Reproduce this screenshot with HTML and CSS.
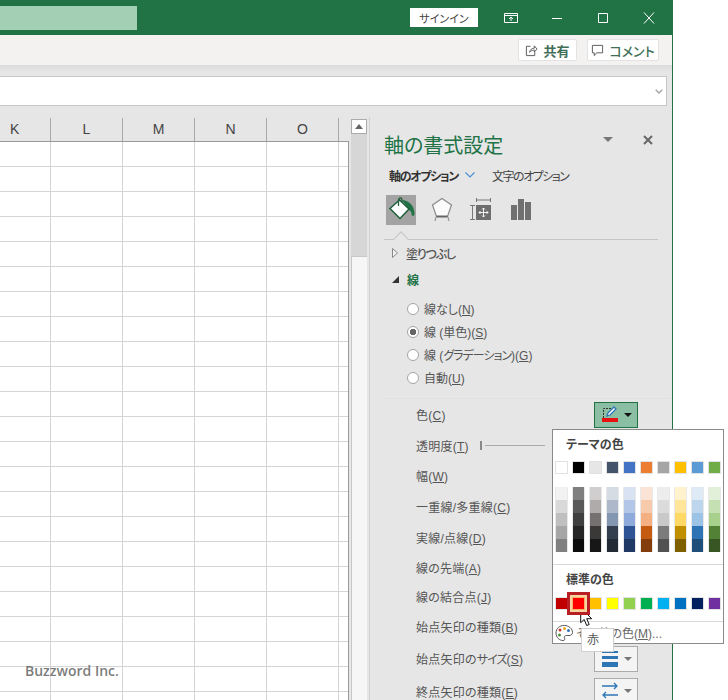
FILE: index.html
```html
<!DOCTYPE html>
<html lang="ja">

<head>
    <meta charset="utf-8">
    <link rel="stylesheet" href="styles.css">
</head>

<body>

    <div class="app">
        <header class="titlebar">
            <div class="file-name"></div>
            <button class="signin">サインイン</button>
            <div class="win-controls">
                <svg class="win-icon" viewBox="0 0 14 12"><path d="M.5 1.5h13v9H.5zM.5 3.5h13M7 9V5M5 7l2-2 2 2" fill="none" stroke="#fff"/></svg>
                <svg class="win-icon" viewBox="0 0 14 12"><path d="M2 6.5h10" fill="none" stroke="#fff"/></svg>
                <svg class="win-icon" viewBox="0 0 14 12"><path d="M2.5 1.5h9v9h-9z" fill="none" stroke="#fff"/></svg>
                <svg class="win-icon" viewBox="0 0 14 12"><path d="M2 .5l10 11M12 .5l-10 11" fill="none" stroke="#fff"/></svg>
            </div>
        </header>

        <div class="ribbon">
            <button class="ribbon-btn share-btn">
                <svg class="ribbon-icon" viewBox="0 0 14 14"><path d="M6 2.5H1.5v10h9V8M5 9c.3-3 2.500-4.500 5-4.500V2l3 3.500-3 3V6.500C8 6.500 6 7.500 5 9z" fill="none" stroke="#555"/></svg>
                共有
            </button>
            <button class="ribbon-btn comment-btn">
                <svg class="ribbon-icon" viewBox="0 0 14 14"><path d="M1.500 1.500h11v8H6l-2.500 3v-3h-2z" fill="none" stroke="#555"/></svg>
                コメント
            </button>
        </div>

        <div class="formula-area">
            <div class="formula-box">
                <svg class="formula-chevron" viewBox="0 0 8 5"><path d="M.7.7L4 4l3.300-3.300" fill="none" stroke="#aaa" stroke-width="1.500"/></svg>
            </div>
        </div>

        <div class="workspace">
            <div class="sheet">
                <div class="col-headers">
                    <div class="col-head col-cut">K</div>
                    <div class="col-head">L</div>
                    <div class="col-head">M</div>
                    <div class="col-head">N</div>
                    <div class="col-head">O</div>
                </div>
                <div class="cells"></div>
            </div>

            <div class="scrollbar">
                <div class="scroll-up"></div>
                <div class="scroll-track"></div>
                <div class="scroll-thumb"></div>
            </div>

            <aside class="panel">
                <div class="panel-head">
                    <h1 class="panel-title">軸の書式設定</h1>
                    <span class="panel-menu"></span>
                    <svg class="panel-close" viewBox="0 0 10 10"><path d="M1 1l8 8M9 1l-8 8" fill="none" stroke="#666" stroke-width="2"/></svg>
                </div>

                <div class="panel-tabs">
                    <span class="tab-active">軸のオプション</span>
                    <svg class="tab-chevron" viewBox="0 0 10 6"><path d="M.5.5L5 5 9.500.5" fill="none" stroke="#4a90d0" stroke-width="1.200"/></svg>
                    <span class="tab-other">文字のオプション</span>
                </div>

                <div class="icon-tabs">
                    <div class="icon-tab icon-tab-on">
                        <svg viewBox="0 0 30 30" width="30" height="30">
                            <path d="M16 5c6 0 12 5 12.500 13 0 2-.5 3-1.500 3s-1.500-1-1.500-2.500c0-1.500-1-2.500-2.500-3.500z" fill="#217346"/>
                            <path d="M4 13.500L13.500 5 23 14l-9 9.500z" fill="#fff" stroke="#1f5f3c" stroke-width="1.500"/>
                            <path d="M12.500 11V5.500c0-3.500 3.500-3.500 3.500 0V7" fill="none" stroke="#1f5f3c" stroke-width="1.300"/>
                        </svg>
                    </div>
                    <div class="icon-tab">
                        <svg viewBox="0 0 30 30" width="30" height="30">
                            <path d="M16 3.500l9.500 6.500-4 11.500h-11L6.500 10z" fill="#fbfbfb" stroke="#8a8a8a" stroke-width="1.200"/>
                            <path d="M10.500 21.500h11" stroke="#666" stroke-width="2"/>
                            <path d="M10 22l-1 4M22 22l1 4" stroke="#999" stroke-width="1.200"/>
                        </svg>
                    </div>
                    <div class="icon-tab">
                        <svg viewBox="0 0 30 30" width="30" height="30">
                            <rect x="10" y="10" width="15" height="15" fill="#6e6e6e"/>
                            <path d="M10 5h15M10.500 3v4M24.500 3v4M6.500 10v15M4 10.500h5M4 24.500h5" stroke="#777" fill="none"/>
                            <path d="M17.500 13v9M13 17.500h9M16 14.500l1.500-1.500 1.500 1.500M16 20.500l1.500 1.500 1.500-1.500M14.500 16L13 17.500l1.500 1.500M20.500 16l1.500 1.500-1.500 1.500" stroke="#fff" fill="none" stroke-width=".9"/>
                        </svg>
                    </div>
                    <div class="icon-tab">
                        <svg viewBox="0 0 30 30" width="30" height="30">
                            <path d="M5 10h6v15H5zM12 4h6v21h-6zM19 7h6v18h-6z" fill="#707070"/>
                        </svg>
                    </div>
                </div>

                <div class="tab-rule"><span class="tab-notch"></span></div>

                <div class="section-head">
                    <svg class="caret" viewBox="0 0 6 10"><path d="M.5.500l5 4.500-5 4.500z" fill="#f0f0f0" stroke="#888"/></svg>
                    <span class="section-text">塗りつぶし</span>
                </div>
                <div class="section-head section-open">
                    <svg class="caret" viewBox="0 0 7 7"><path d="M7 0v7H0z" fill="#333"/></svg>
                    線
                </div>

                <div class="radios">
                    <label class="radio-row"><span class="radio"></span><span>線なし(<u>N</u>)</span></label>
                    <label class="radio-row"><span class="radio radio-on"></span><span>線 (単色)(<u>S</u>)</span></label>
                    <label class="radio-row"><span class="radio"></span><span>線 (<span class="kana">グラデーション</span>)(<u>G</u>)</span></label>
                    <label class="radio-row"><span class="radio"></span><span>自動(<u>U</u>)</span></label>
                </div>

                <div class="options">
                    <div class="opt-row"><span>色(<u>C</u>)</span>
                        <button class="pick-btn pick-on">
                            <svg viewBox="0 0 18 18" width="18" height="18">
                                <path d="M2.500 12V2.500h8" fill="none" stroke="#333" stroke-dasharray="2 1"/>
                                <path d="M6 10l1-3 6-6 2 2-6 6z" fill="#fff" stroke="#2e75b5" stroke-width="1.300"/>
                                <path d="M1 12h16v4H1z" fill="#e81010"/>
                            </svg>
                            <span class="pick-arrow"></span>
                        </button>
                    </div>
                    <div class="opt-row"><span>透明度(<u>T</u>)</span><span class="slider"></span></div>
                    <div class="opt-row"><span>幅(<u>W</u>)</span></div>
                    <div class="opt-row"><span>一重線/多重線(<u>C</u>)</span></div>
                    <div class="opt-row"><span>実線/点線(<u>D</u>)</span></div>
                    <div class="opt-row"><span>線の先端(<u>A</u>)</span></div>
                    <div class="opt-row"><span>線の結合点(<u>J</u>)</span></div>
                    <div class="opt-row"><span>始点矢印の種類(<u>B</u>)</span></div>
                    <div class="opt-row"><span>始点矢印の<span class="kana">サイズ</span>(<u>S</u>)</span>
                        <button class="pick-btn">
                            <svg viewBox="0 0 18 18" width="18" height="18">
                                <path d="M1 1h16v2H1zM1 6h16v3H1zM1 12h16v5H1z" fill="#2e75b5"/>
                            </svg>
                            <span class="pick-arrow pick-arrow-grey"></span>
                        </button>
                    </div>
                    <div class="opt-row"><span>終点矢印の種類(<u>E</u>)</span>
                        <button class="pick-btn">
                            <svg viewBox="0 0 18 18" width="18" height="18">
                                <path d="M1 4h15M13 1l3 3-3 3M17 13H2M5 10l-3 3 3 3" fill="none" stroke="#2e75b5" stroke-width="1.300"/>
                            </svg>
                            <span class="pick-arrow pick-arrow-grey"></span>
                        </button>
                    </div>
                </div>
            </aside>
        </div>
    </div>

    <!-- 色の選択メニュー -->
    <div class="color-menu">
        <div class="menu-label">テーマの色</div>
        <div class="swatch-row">
            <span class="swatch" style="background:#ffffff"></span>
            <span class="swatch" style="background:#000000"></span>
            <span class="swatch" style="background:#e7e6e6"></span>
            <span class="swatch" style="background:#44546a"></span>
            <span class="swatch" style="background:#4472c4"></span>
            <span class="swatch" style="background:#ed7d31"></span>
            <span class="swatch" style="background:#a5a5a5"></span>
            <span class="swatch" style="background:#ffc000"></span>
            <span class="swatch" style="background:#5b9bd5"></span>
            <span class="swatch" style="background:#70ad47"></span>
        </div>
        <div class="shade-grid">
            <div class="shade-col"><span style="background:#f2f2f2"></span><span style="background:#d9d9d9"></span><span style="background:#bfbfbf"></span><span style="background:#a6a6a6"></span><span style="background:#808080"></span></div>
            <div class="shade-col"><span style="background:#7f7f7f"></span><span style="background:#595959"></span><span style="background:#404040"></span><span style="background:#262626"></span><span style="background:#0d0d0d"></span></div>
            <div class="shade-col"><span style="background:#d0cece"></span><span style="background:#afabab"></span><span style="background:#767171"></span><span style="background:#3b3838"></span><span style="background:#181717"></span></div>
            <div class="shade-col"><span style="background:#d6dce4"></span><span style="background:#adb9ca"></span><span style="background:#8497b0"></span><span style="background:#333f4f"></span><span style="background:#222b35"></span></div>
            <div class="shade-col"><span style="background:#d9e2f3"></span><span style="background:#b4c6e7"></span><span style="background:#8eaadb"></span><span style="background:#2f5496"></span><span style="background:#1f3864"></span></div>
            <div class="shade-col"><span style="background:#fbe4d5"></span><span style="background:#f7caac"></span><span style="background:#f4b083"></span><span style="background:#c55a11"></span><span style="background:#833c0b"></span></div>
            <div class="shade-col"><span style="background:#ededed"></span><span style="background:#dbdbdb"></span><span style="background:#c9c9c9"></span><span style="background:#7b7b7b"></span><span style="background:#525252"></span></div>
            <div class="shade-col"><span style="background:#fff2cc"></span><span style="background:#ffe599"></span><span style="background:#ffd966"></span><span style="background:#bf8f00"></span><span style="background:#7f6000"></span></div>
            <div class="shade-col"><span style="background:#deeaf6"></span><span style="background:#bdd6ee"></span><span style="background:#9cc2e5"></span><span style="background:#2e74b5"></span><span style="background:#1f4e79"></span></div>
            <div class="shade-col"><span style="background:#e2efd9"></span><span style="background:#c5e0b3"></span><span style="background:#a8d08d"></span><span style="background:#538135"></span><span style="background:#375623"></span></div>
        </div>
        <div class="menu-rule"></div>
        <div class="menu-label menu-label-std">標準の色</div>
        <div class="swatch-row">
            <span class="swatch" style="background:#c00000"></span>
            <span class="swatch swatch-hot" style="background:#ff0000"></span>
            <span class="swatch" style="background:#ffc000"></span>
            <span class="swatch" style="background:#ffff00"></span>
            <span class="swatch" style="background:#92d050"></span>
            <span class="swatch" style="background:#00b050"></span>
            <span class="swatch" style="background:#00b0f0"></span>
            <span class="swatch" style="background:#0070c0"></span>
            <span class="swatch" style="background:#002060"></span>
            <span class="swatch" style="background:#7030a0"></span>
        </div>
        <div class="menu-rule menu-rule-low"></div>
        <div class="more-colors">
            <svg viewBox="0 0 18 18" width="18" height="18">
                <path d="M9 1.500C4.500 1.500 1 4.500 1 9s3.500 7.500 7 7.500c2 0 2-1.500 1.500-2.500s0-2.500 2-2.500h2.500c2 0 3.500-1 3.500-3 0-4-4-7-8-7z" fill="#fff" stroke="#555"/>
                <circle cx="5" cy="6" r="1.500" fill="#c0392b"/>
                <circle cx="9.500" cy="4.500" r="1.500" fill="#e6a817"/>
                <circle cx="13.500" cy="6.500" r="1.500" fill="#2e75b5"/>
                <circle cx="4.500" cy="11" r="1.500" fill="#4a8f3c"/>
            </svg>
            <span class="more-text">その他の色(<u>M</u>)...</span>
        </div>
    </div>

    <div class="tooltip">赤</div>

    <svg class="cursor" viewBox="0 0 13 20" width="13" height="20">
        <path d="M.7.7v15l3.500-3.200 2.500 6 2.500-1-2.500-5.800h5z" fill="#fff" stroke="#111"/>
    </svg>

    <div class="watermark">Buzzword Inc.</div>

</body>

</html>
```

FILE: styles.css
```css
html,
body {
    margin: 0;
    height: 700px;
    overflow: hidden;
    background: #fff;
}

body {
    position: relative;
    font-family: "Liberation Sans", "Noto Sans CJK JP", sans-serif;
    font-size: 12px;
    font-feature-settings: "palt";
    color: #444;
}

button {
    font-family: inherit;
    font-feature-settings: inherit;
    cursor: default;
}

.app {
    width: 672px;
    height: 700px;
    display: flex;
    flex-direction: column;
    border-right: 1px solid #217346;
    background: #e6e6e6;
}

/* タイトルバー */
.titlebar {
    height: 35px;
    flex: none;
    display: flex;
    align-items: center;
    background: #217346;
}

.file-name {
    width: 137px;
    height: 24px;
    margin-right: 273px;
    background: #a3cfb5;
}

.signin {
    width: 68px;
    height: 19px;
    padding: 0;
    border: 0;
    background: #fff;
    font-size: 11px;
    color: #444;
}

.win-controls {
    display: flex;
    margin-left: 10px;
}

.win-icon {
    width: 14px;
    height: 12px;
    margin: 0 16px;
}

/* リボン */
.ribbon {
    height: 30px;
    flex: none;
    display: flex;
    justify-content: flex-end;
    align-items: center;
    gap: 10px;
    padding-right: 13px;
    box-sizing: border-box;
    background: #f3f2f1;
}

.ribbon-btn {
    height: 22px;
    display: flex;
    align-items: center;
    justify-content: center;
    gap: 5px;
    padding: 0;
    border: 1px solid #e3e3e3;
    border-radius: 2px;
    background: #fff;
    font-size: 13px;
    font-weight: 700;
    color: #3f6f57;
}

.share-btn {
    width: 59px;
}

.comment-btn {
    width: 72px;
    font-weight: 500;
}

.ribbon-icon {
    width: 13px;
    height: 13px;
}

.formula-area {
    height: 53px;
    flex: none;
    padding: 11px 5px 12px 0;
    box-sizing: border-box;
    background: linear-gradient(#dcdcdc, #e6e6e6 7px);
}

.formula-box {
    height: 30px;
    display: flex;
    justify-content: flex-end;
    align-items: center;
    padding-right: 3px;
    box-sizing: border-box;
    border: 1px solid #c6c6c6;
    border-left: 0;
    background: #fff;
}

.formula-chevron {
    width: 8px;
    height: 5px;
}

/* ワークスペース */
.workspace {
    flex: 1;
    display: flex;
    min-height: 0;
}

.sheet {
    width: 349px;
    flex: none;
    display: flex;
    flex-direction: column;
}

.col-headers {
    height: 23px;
    flex: none;
    display: flex;
}

.col-head {
    width: 72px;
    flex: none;
    box-sizing: border-box;
    border-right: 1px solid #a9a9a9;
    text-align: center;
    font-size: 14px;
    line-height: 23px;
    color: #444;
}

.col-cut {
    width: 51px;
    padding-left: 10px;
    text-align: left;
}

.cells {
    flex: 1;
    border-top: 1px solid #9a9a9a;
    border-right: 1px solid #9a9a9a;
    background-color: #fff;
    background-image:
        linear-gradient(to right, transparent 71px, #d4d4d4 71px),
        linear-gradient(to bottom, transparent 24px, #d4d4d4 24px);
    background-size: 72px 100%, 100% 25px;
    background-position: -21px 0, 0 0;
}

.scrollbar {
    width: 16px;
    flex: none;
    margin: 1px 2px 0 2px;
    display: flex;
    flex-direction: column;
}

.scroll-up {
    height: 15px;
    flex: none;
    box-sizing: border-box;
    border: 1px solid #ababab;
    background: #fff;
    position: relative;
}

.scroll-up::after {
    content: "";
    position: absolute;
    left: 3px;
    top: 4px;
    border: 4px solid transparent;
    border-top: 0;
    border-bottom: 5px solid #666;
}

.scroll-track {
    height: 122px;
    flex: none;
    background: #d6d6d6;
}

.scroll-thumb {
    flex: 1;
    background: #f6f6f6;
    border-left: 1px solid #c8c8c8;
    border-top: 1px solid #c8c8c8;
}

/* 書式設定パネル */
.panel {
    width: 302px;
    flex: none;
    margin-top: -1px;
    padding-left: 14px;
    box-sizing: border-box;
    border-left: 1px solid #d2d2d2;
    overflow: hidden;
}

.panel-head {
    height: 47px;
    display: flex;
    align-items: center;
    padding-top: 8px;
    box-sizing: border-box;
}

.panel-title {
    margin: 0;
    flex: 1;
    font-size: 20px;
    font-weight: 400;
    color: #217346;
}

.panel-menu {
    width: 0;
    margin-right: 30px;
    margin-bottom: 10px;
    border: 5px solid transparent;
    border-bottom: 0;
    border-top: 5px solid #777;
}

.panel-close {
    width: 10px;
    height: 10px;
    margin-right: 18px;
    margin-bottom: 10px;
}

.panel-tabs {
    height: 22px;
    display: flex;
    align-items: center;
    padding-left: 5px;
    color: #444;
}

.tab-active {
    font-weight: 700;
    letter-spacing: -1.3px;
    color: #333;
}

.tab-chevron {
    width: 10px;
    height: 6px;
    margin-left: 7px;
}

.tab-other {
    margin-left: 17px;
    letter-spacing: -1.5px;
}

.icon-tabs {
    display: flex;
    gap: 10px;
    margin-top: 9px;
    padding-left: 2px;
}

.icon-tab {
    width: 30px;
    height: 30px;
}

.icon-tab-on {
    background: #a3a3a3;
}

.tab-rule {
    position: relative;
    width: 274px;
    height: 15px;
    box-sizing: border-box;
    border-bottom: 1px solid #c4c4c4;
}

.tab-notch {
    position: absolute;
    left: 11px;
    bottom: -6px;
    width: 12px;
    height: 12px;
    box-sizing: border-box;
    border-top: 1px solid #c4c4c4;
    border-left: 1px solid #c4c4c4;
    background: #e6e6e6;
    transform: rotate(45deg) scale(.9);
}

.section-head {
    height: 26px;
    display: flex;
    align-items: center;
    gap: 8px;
    padding-left: 8px;
    font-weight: 700;
    color: #555;
}

.section-head:first-of-type {
    margin-top: 2px;
}

.section-text {
    font-weight: 500;
    letter-spacing: -1.2px;
}

.section-open {
    color: #217346;
}

.caret {
    width: 6px;
    height: 10px;
}

.section-open .caret {
    width: 7px;
    height: 7px;
}

.radios {
    margin-top: 5px;
    padding-left: 23px;
}

.radio-row {
    height: 23px;
    display: flex;
    align-items: center;
    gap: 5px;
    color: #555;
}

.radio {
    width: 12px;
    height: 12px;
    box-sizing: border-box;
    border: 1px solid #a4a4a4;
    border-radius: 50%;
    background: #fff;
}

.radio-on {
    background: radial-gradient(circle, #666 0 3px, #fff 3.500px);
}

.kana {
    letter-spacing: -1px;
}

/* 線の設定項目 */
.options {
    margin-top: 9px;
    padding: 0 33px 0 32px;
    display: grid;
    grid-template-rows: 31px 30px 30px 32px 31px 29px 29px 31px 33px 32px;
    border-top: 1px solid #e0e0e0;
}

.opt-row {
    display: flex;
    justify-content: space-between;
    align-items: center;
    white-space: nowrap;
    letter-spacing: .25px;
    color: #555;
}

.opt-row u {
    text-underline-offset: 1px;
}

.slider {
    flex: none;
    width: 63px;
    height: 9px;
    margin: 0 auto 0 11px;
    border-left: 2px solid #888;
    background: linear-gradient(#aaa, #aaa) 3px 4px / 100% 1px no-repeat;
}

.pick-btn {
    width: 44px;
    height: 26px;
    flex: none;
    display: flex;
    align-items: center;
    justify-content: center;
    gap: 5px;
    padding: 0;
    border: 1px solid #ababab;
    background: #f4f4f4;
}

.pick-on {
    border-color: #217346;
    background: #8abfa3;
}

.pick-arrow {
    border: 4px solid transparent;
    border-bottom: 0;
    border-top: 4px solid #111;
}

.pick-arrow-grey {
    border-top-color: #777;
}

/* 色メニュー */
.color-menu {
    position: absolute;
    left: 552px;
    top: 429px;
    width: 172px;
    height: 215px;
    box-sizing: border-box;
    border: 1px solid #8a8a8a;
    background: #fff;
}

.menu-label {
    height: 31px;
    padding-left: 13px;
    line-height: 31px;
    font-weight: 700;
    color: #444;
}

.menu-label-std {
    height: 32px;
    line-height: 31px;
}

.swatch-row {
    display: flex;
    gap: 4px;
    padding-left: 2px;
}

.swatch {
    width: 11px;
    height: 11px;
    flex: none;
    border: 1px solid #e2e2e2;
}

.swatch-hot {
    position: relative;
    z-index: 1;
    border-color: #f6b26b;
    box-shadow: 0 0 0 2px #f9d3a2, 0 0 0 5px #b81f25;
}

.shade-grid {
    display: flex;
    gap: 4px;
    padding-left: 2px;
    margin-top: 13px;
}

.shade-col {
    width: 13px;
    flex: none;
    display: flex;
    flex-direction: column;
}

.shade-col span {
    height: 13px;
    box-shadow: inset 1px 0 #e8e8e8, inset -1px 0 #e8e8e8;
}

.menu-rule {
    height: 1px;
    margin-top: 12px;
    background: #d8d8d8;
}

.menu-rule-low {
    margin-top: 11px;
}

.more-colors {
    height: 21px;
    display: flex;
    align-items: center;
    gap: 3px;
    padding-left: 2px;
}

.more-text {
    color: #666;
}

.tooltip {
    position: absolute;
    left: 581px;
    top: 628px;
    width: 33px;
    height: 24px;
    box-sizing: border-box;
    padding-left: 5px;
    border: 1px solid #d0d0d0;
    background: #fff;
    line-height: 22px;
    color: #555;
}

.cursor {
    position: absolute;
    left: 580px;
    top: 607px;
}

.watermark {
    position: absolute;
    left: 25px;
    top: 661px;
    font-family: "Open Sans", sans-serif;
    font-size: 14px;
    font-weight: 600;
    color: rgba(100, 100, 100, 0.85);
}
```
